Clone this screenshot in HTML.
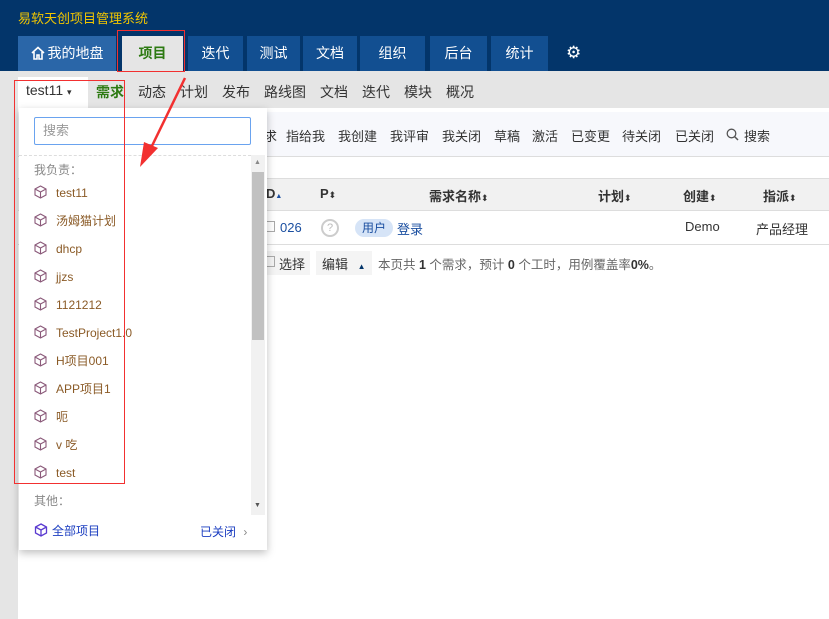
<!DOCTYPE html><html><head><meta charset="utf-8"><style>
*{margin:0;padding:0;box-sizing:border-box}
body{width:829px;height:619px;overflow:hidden;position:relative;background:#fff;font-family:"Liberation Sans","Noto Sans CJK SC",sans-serif;font-size:13px;color:#333}
.a{position:absolute}
#hd{left:0;top:0;width:829px;height:71px;background:#03356a}
.tab{position:absolute;top:36px;height:35px;background:#124f91;color:#fff;font-size:14px;text-align:center;line-height:35px}
#sub{left:0;top:71px;width:829px;height:37px;background:#e5e5e5}
.sn{position:absolute;top:82px;font-size:14px;color:#333}
.tb{position:absolute;top:126px;font-size:13px;color:#333}
.cube{display:inline-block;vertical-align:-2px;margin-right:9px}
.it{position:absolute;left:34px;font-size:12px;color:#8a5a26;height:16px;line-height:16px}
.th{position:absolute;top:186px;font-size:13px;font-weight:bold;color:#333}
.s{font-size:9px;font-weight:normal}
</style></head><body>
<div id="hd" class="a"></div>
<div class="a" style="left:18px;top:8px;color:#f2c600;font-size:13px">易软天创项目管理系统</div>
<div class="tab" style="left:18px;width:98px;background:#2a66a8"><svg width="14" height="14" viewBox="0 0 14 14" style="vertical-align:-2px;margin-right:3px"><path d="M1 7L7 1.5 13 7M3 6v7h3V9h2v4h3V6" fill="none" stroke="#fff" stroke-width="1.6"/></svg>我的地盘</div>
<div class="tab" style="left:122px;width:61px;background:#e5e5e5;color:#2d7a12;font-weight:bold">项目</div>
<div class="tab" style="left:188px;width:55px">迭代</div>
<div class="tab" style="left:247px;width:53px">测试</div>
<div class="tab" style="left:303px;width:54px">文档</div>
<div class="tab" style="left:360px;width:65px">组织</div>
<div class="tab" style="left:430px;width:57px">后台</div>
<div class="tab" style="left:491px;width:57px">统计</div>
<div class="a" style="left:566px;top:43px;color:#fff;font-size:17px">⚙</div>
<div id="sub" class="a"></div>
<div class="a" style="left:0;top:108px;width:18px;height:511px;background:#e5e5e5"></div>
<div class="a" style="left:18px;top:77px;width:70px;height:31px;background:#fff"></div>
<div class="sn" style="left:26px">test11 <span style="font-size:9px">▾</span></div>
<div class="sn" style="left:96px;color:#2d7a12;font-weight:bold">需求</div>
<div class="sn" style="left:138px">动态</div><div class="sn" style="left:180px">计划</div><div class="sn" style="left:222px">发布</div><div class="sn" style="left:264px">路线图</div><div class="sn" style="left:320px">文档</div><div class="sn" style="left:362px">迭代</div><div class="sn" style="left:404px">模块</div><div class="sn" style="left:446px">概况</div>
<div class="a" style="left:18px;top:112px;width:811px;height:45px;background:#f7f8fc;border-bottom:1px solid #ddd"></div>
<div class="tb" style="left:264px">求</div><div class="tb" style="left:286px">指给我</div><div class="tb" style="left:338px">我创建</div><div class="tb" style="left:390px">我评审</div><div class="tb" style="left:442px">我关闭</div><div class="tb" style="left:494px">草稿</div><div class="tb" style="left:532px">激活</div><div class="tb" style="left:571px">已变更</div><div class="tb" style="left:622px">待关闭</div><div class="tb" style="left:675px">已关闭</div>
<svg class="a" style="left:726px;top:128px" width="13" height="13" viewBox="0 0 13 13"><circle cx="5.5" cy="5.5" r="4.3" fill="none" stroke="#555" stroke-width="1.3"/><path d="M8.6 8.6L12 12" stroke="#555" stroke-width="1.5"/></svg>
<div class="tb" style="left:744px">搜索</div>
<div class="a" style="left:18px;top:178px;width:811px;height:33px;background:#f1f1f1;border-top:1px solid #ddd;border-bottom:1px solid #ddd"></div>
<div class="th" style="left:266px">D<span style="font-size:7px;color:#1a4ea0">▲</span></div>
<div class="th" style="left:320px">P<span class="s">⬍</span></div>
<div class="th" style="left:429px">需求名称<span class="s">⬍</span></div>
<div class="th" style="left:598px">计划<span class="s">⬍</span></div>
<div class="th" style="left:683px">创建<span class="s">⬍</span></div>
<div class="th" style="left:763px">指派<span class="s">⬍</span></div>
<div class="a" style="left:18px;top:244px;width:811px;height:1px;background:#ddd"></div>
<div class="a" style="left:266px;top:221px;width:9px;height:11px;border:1px solid #aaa;border-left:none"></div>
<div class="a" style="left:280px;top:220px;color:#1a4ea0">026</div>
<div class="a" style="left:321px;top:219px;width:18px;height:18px;border:2px solid #ccc;border-radius:50%;color:#bbb;font-size:11px;text-align:center;line-height:14px">?</div>
<div class="a" style="left:355px;top:219px;width:38px;height:18px;background:#d6e4f7;border-radius:9px;color:#1a4ea0;font-size:12px;text-align:center;line-height:18px">用户</div>
<div class="a" style="left:397px;top:219px;color:#1a4ea0">登录</div>
<div class="a" style="left:685px;top:219px">Demo</div>
<div class="a" style="left:756px;top:219px">产品经理</div>
<div class="a" style="left:262px;top:251px;width:48px;height:24px;background:#f4f4f4"></div>
<div class="a" style="left:266px;top:256px;width:9px;height:11px;border:1px solid #aaa;border-left:none"></div>
<div class="a" style="left:279px;top:254px">选择</div>
<div class="a" style="left:316px;top:251px;width:56px;height:24px;background:#f4f4f4"></div>
<div class="a" style="left:322px;top:254px">编辑 <span style="font-size:8px;color:#03356a;margin-left:6px">▲</span></div>
<div class="a" style="left:378px;top:254px;color:#666;font-size:12.5px">本页共 <b style="color:#333">1</b> 个需求，预计 <b style="color:#333">0</b> 个工时，用例覆盖率<b style="color:#333">0%</b>。</div>
<!-- dropdown -->
<div class="a" style="left:19px;top:108px;width:248px;height:442px;background:#fff;box-shadow:0 3px 8px rgba(0,0,0,.25)"></div>
<div class="a" style="left:34px;top:117px;width:217px;height:28px;border:1px solid #6aa3ef;border-radius:2px;padding-left:8px;line-height:26px;color:#999">搜索</div>
<div class="a" style="left:19px;top:155px;width:232px;border-top:1px dashed #ddd"></div>
<div class="a" style="left:251px;top:155px;width:14px;height:360px;background:#f1f1f1"></div>
<div class="a" style="left:252px;top:172px;width:12px;height:168px;background:#c1c1c1"></div>
<div class="a" style="left:254px;top:159px;font-size:7px;color:#888">▲</div>
<div class="a" style="left:254px;top:502px;font-size:7px;color:#555">▼</div>
<div class="a" style="left:34px;top:161px;font-size:12px;color:#888">我负责：</div>
<div class="it" style="top:185px"><svg class="cube" width="13" height="14" viewBox="0 0 13 14"><path d="M6.5 1L12 4v6l-5.5 3L1 10V4zM1 4l5.5 3L12 4M6.5 7v6" fill="none" stroke="#8b5a7a" stroke-width="1.1"/></svg>test11</div>
<div class="it" style="top:213px"><svg class="cube" width="13" height="14" viewBox="0 0 13 14"><path d="M6.5 1L12 4v6l-5.5 3L1 10V4zM1 4l5.5 3L12 4M6.5 7v6" fill="none" stroke="#8b5a7a" stroke-width="1.1"/></svg>汤姆猫计划</div>
<div class="it" style="top:241px"><svg class="cube" width="13" height="14" viewBox="0 0 13 14"><path d="M6.5 1L12 4v6l-5.5 3L1 10V4zM1 4l5.5 3L12 4M6.5 7v6" fill="none" stroke="#8b5a7a" stroke-width="1.1"/></svg>dhcp</div>
<div class="it" style="top:269px"><svg class="cube" width="13" height="14" viewBox="0 0 13 14"><path d="M6.5 1L12 4v6l-5.5 3L1 10V4zM1 4l5.5 3L12 4M6.5 7v6" fill="none" stroke="#8b5a7a" stroke-width="1.1"/></svg>jjzs</div>
<div class="it" style="top:297px"><svg class="cube" width="13" height="14" viewBox="0 0 13 14"><path d="M6.5 1L12 4v6l-5.5 3L1 10V4zM1 4l5.5 3L12 4M6.5 7v6" fill="none" stroke="#8b5a7a" stroke-width="1.1"/></svg>1121212</div>
<div class="it" style="top:325px"><svg class="cube" width="13" height="14" viewBox="0 0 13 14"><path d="M6.5 1L12 4v6l-5.5 3L1 10V4zM1 4l5.5 3L12 4M6.5 7v6" fill="none" stroke="#8b5a7a" stroke-width="1.1"/></svg>TestProject1.0</div>
<div class="it" style="top:353px"><svg class="cube" width="13" height="14" viewBox="0 0 13 14"><path d="M6.5 1L12 4v6l-5.5 3L1 10V4zM1 4l5.5 3L12 4M6.5 7v6" fill="none" stroke="#8b5a7a" stroke-width="1.1"/></svg>H项目001</div>
<div class="it" style="top:381px"><svg class="cube" width="13" height="14" viewBox="0 0 13 14"><path d="M6.5 1L12 4v6l-5.5 3L1 10V4zM1 4l5.5 3L12 4M6.5 7v6" fill="none" stroke="#8b5a7a" stroke-width="1.1"/></svg>APP项目1</div>
<div class="it" style="top:409px"><svg class="cube" width="13" height="14" viewBox="0 0 13 14"><path d="M6.5 1L12 4v6l-5.5 3L1 10V4zM1 4l5.5 3L12 4M6.5 7v6" fill="none" stroke="#8b5a7a" stroke-width="1.1"/></svg>呃</div>
<div class="it" style="top:437px"><svg class="cube" width="13" height="14" viewBox="0 0 13 14"><path d="M6.5 1L12 4v6l-5.5 3L1 10V4zM1 4l5.5 3L12 4M6.5 7v6" fill="none" stroke="#8b5a7a" stroke-width="1.1"/></svg>v 吃</div>
<div class="it" style="top:465px"><svg class="cube" width="13" height="14" viewBox="0 0 13 14"><path d="M6.5 1L12 4v6l-5.5 3L1 10V4zM1 4l5.5 3L12 4M6.5 7v6" fill="none" stroke="#8b5a7a" stroke-width="1.1"/></svg>test</div>
<div class="a" style="left:34px;top:492px;font-size:12px;color:#888">其他：</div>
<div class="a" style="left:34px;top:522px;font-size:12px;color:#1a3cc0"><svg width="14" height="14" viewBox="0 0 13 14" style="vertical-align:-2px;margin-right:4px"><path d="M6.5 1L12 4v6l-5.5 3L1 10V4zM1 4l5.5 3L12 4M6.5 7v6" fill="none" stroke="#5a3ad0" stroke-width="1.3"/></svg>全部项目</div>
<div class="a" style="left:200px;top:523px;font-size:12px;color:#1a3cc0">已关闭 <span style="color:#888;margin-left:4px">›</span></div>
<!-- annotations -->
<div class="a" style="left:117px;top:30px;width:68px;height:42px;border:1px solid #f23030"></div>
<div class="a" style="left:14px;top:80px;width:111px;height:404px;border:1px solid #f23030"></div>
<svg class="a" style="left:0;top:0" width="829" height="619"><path d="M185 78L150 150" stroke="#f23030" stroke-width="2.5"/><path d="M140 167L144 142L158 148Z" fill="#f23030"/></svg>
</body></html>
